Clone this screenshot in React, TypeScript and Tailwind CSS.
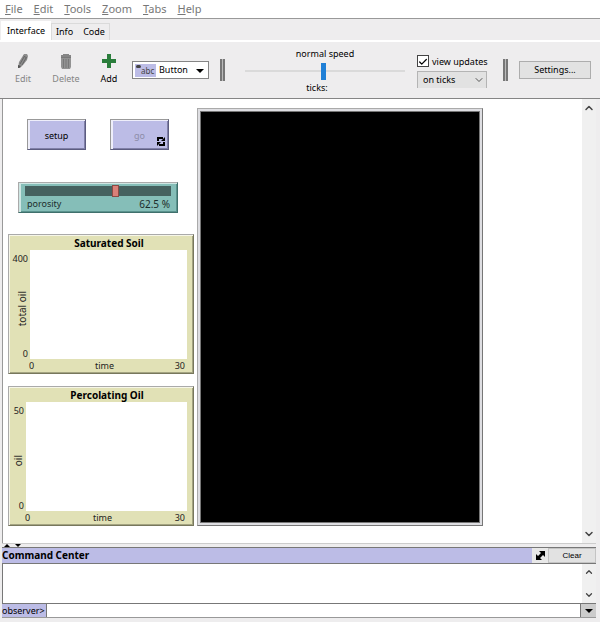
import React from "react";
import { Check, ChevronDown, ChevronUp } from "lucide-react";

const menus = ["File", "Edit", "Tools", "Zoom", "Tabs", "Help"];

function PencilIcon() {
  return (
    <svg width="12" height="16" viewBox="0 0 12 16" aria-hidden="true">
      <path d="M7 1h3l1 2-1 4-4 5-3 3H1l1-6z" fill="#8c8c8c" />
      <path d="M6.500 3l3.500 2M7 4l-4 7M9 5l-4 7" stroke="#666" fill="none" />
      <path d="M1 12l3 1-2 2H1z" fill="#555" />
    </svg>
  );
}

function TrashIcon() {
  return (
    <svg width="12" height="16" viewBox="0 0 12 16" aria-hidden="true">
      <path d="M3 1h6v1h2v3H1V2h2z" fill="#858585" />
      <path d="M1 5h10v9l-1 2H2l-1-2z" fill="#929292" />
      <path d="M1 4.500h10M3.500 6v9M6 6v9M8.500 6v9" stroke="#787878" fill="none" />
    </svg>
  );
}

function PlusIcon() {
  return (
    <svg width="14" height="14" viewBox="0 0 14 14" aria-hidden="true">
      <path d="M5 0h4v5h5v4H9v5H5V9H0V5h5z" fill="#2a7d3b" />
    </svg>
  );
}

function ForeverIcon() {
  return (
    <svg width="8" height="9" viewBox="0 0 8 9" aria-hidden="true">
      <path d="M1 4V1h5M7 5v3H2" stroke="#000" strokeWidth="2" fill="none" />
      <path d="M4 4h4V0zM4 5H0v4z" fill="#000" />
    </svg>
  );
}

function Divider() {
  return (
    <div className="flex h-[22px] shrink-0 gap-px bg-[#bbb]">
      <span className="w-[2px] bg-[#777]" />
      <span className="w-[2px] bg-[#777]" />
    </div>
  );
}

function Tool({ label, icon, disabled }: { label: string; icon: React.ReactNode; disabled?: boolean }) {
  return (
    <button
      disabled={disabled}
      className="flex w-8 flex-col items-center gap-[2px] text-black disabled:text-[#858585]"
    >
      <span className="flex h-4 items-center">{icon}</span>
      <span className="leading-4">{label}</span>
    </button>
  );
}

function Plot({ title, label, max, narrow }: { title: string; label: string; max: string; narrow?: boolean }) {
  return (
    <section className="flex h-[140px] flex-col border border-t-[#aaa] border-l-[#aaa] border-r-[#77775c] border-b-[#77775c] bg-[#e1e1b6] pt-px pr-[5px] text-[#222] shadow-[inset_1px_1px_0_#f6f6e8,inset_-1px_-1px_0_#a4a482]">
      <h2 className={`text-center text-[10px] leading-[14px] font-bold text-black ${narrow ? "pl-[17px]" : "pl-[21px]"}`}>{title}</h2>
      <div className="flex flex-1">
        <div className={`flex justify-end ${narrow ? "w-[17px]" : "w-[21px]"}`}>
          <div className="flex flex-col items-end justify-between pr-[2px]">
            <span className="leading-[18px]">{max}</span>
            <span className="rotate-180 text-[10px] leading-3 [writing-mode:vertical-rl]">{label}</span>
            <span className="leading-[10px]">0</span>
          </div>
        </div>
        <div className="mr-px flex-1 bg-white" />
      </div>
      <div className={`flex justify-between pr-[3px] leading-[14px] ${narrow ? "pl-4" : "pl-5"}`}>
        <span>0</span>
        <span>time</span>
        <span>30</span>
      </div>
    </section>
  );
}

const widgetButton =
  "flex h-[31px] w-[59px] items-center justify-center border border-t-[#999] border-l-[#999] border-r-[#5c5c80] border-b-[#5c5c80] bg-[#bcbce6] pt-[2px] shadow-[inset_2px_1px_0_#eeeefa,inset_-1px_-1px_0_#8080a8]";

export default function App() {
  return (
    <div className="flex min-h-screen flex-col bg-[#eeedee] font-['Noto_Sans',sans-serif] text-[9px] text-black">
      <nav className="flex h-[19px] items-center gap-[11px] border-b border-[#999] bg-white pl-[5px] text-[11px] text-[#777]">
        {menus.map((m) => (
          <button key={m} className="leading-4">
            <span className="underline">{m[0]}</span>
            {m.slice(1)}
          </button>
        ))}
      </nav>

      <div role="tablist" className="flex h-[21px] items-end pl-px">
        <button role="tab" aria-selected="true" className="h-[19px] w-[50px] bg-white">
          Interface
        </button>
        <div className="flex h-[17px] gap-[10px] border border-b-0 border-[#dadada] px-1">
          <button role="tab" aria-selected="false">Info</button>
          <button role="tab" aria-selected="false">Code</button>
        </div>
      </div>

      <div className="flex h-[59px] items-center border-t-2 border-b border-t-white border-b-[#858585] pr-[9px] pl-[7px]">
        <div className="flex gap-[11px]">
          <Tool label="Edit" icon={<PencilIcon />} disabled />
          <Tool label="Delete" icon={<TrashIcon />} disabled />
          <Tool label="Add" icon={<PlusIcon />} />
        </div>
        <div className="relative ml-[7px] flex h-[18px] w-[77px] shrink-0 border border-[#858585] bg-white">
          <span className="pointer-events-none absolute top-[2px] left-[2px] h-[13px] w-[21px] bg-[#bcbce6] pl-[6px] text-[8px] leading-[13px] text-[#444]">
            abc
            <span className="absolute top-px left-px h-[3px] w-[5px] rounded-full bg-[#444]" />
          </span>
          <select aria-label="Widget type" className="w-full appearance-none pl-[26px] leading-4 outline-none">
            <option>Button</option>
          </select>
          <svg width="8" height="4" viewBox="0 0 8 4" className="pointer-events-none absolute top-[7px] right-1" aria-hidden="true">
            <path d="M0 0h8L4 4z" fill="#000" />
          </svg>
        </div>
        <div className="ml-[11px]">
          <Divider />
        </div>
        <div className="flex flex-1 flex-col items-center pr-3 pl-5">
          <label htmlFor="speed" className="leading-4">normal speed</label>
          <input
            id="speed"
            type="range"
            defaultValue={49}
            className="my-px h-[17px] w-full appearance-none bg-transparent bg-[linear-gradient(#dadada,#dadada)] bg-[length:100%_2px] bg-center bg-no-repeat [&::-webkit-slider-thumb]:h-[17px] [&::-webkit-slider-thumb]:w-[5px] [&::-webkit-slider-thumb]:appearance-none [&::-webkit-slider-thumb]:bg-[#1f7fd6]"
          />
          <span className="mr-4 leading-[14px]">ticks:</span>
        </div>
        <div className="flex w-[72px] flex-col gap-[3px] pt-[2px]">
          <label className="flex items-center gap-[3px] leading-[13px]">
            <span className="relative flex h-[13px] w-3 items-center">
              <input type="checkbox" defaultChecked className="peer h-3 w-3 appearance-none border border-[#444] bg-white" />
              <Check className="pointer-events-none absolute top-[2px] left-[1px] hidden peer-checked:block" size={10} strokeWidth={3} />
            </span>
            view updates
          </label>
          <div className="relative">
            <select aria-label="Update mode" className="h-[17px] w-[70px] appearance-none border border-b-0 border-[#b4b4b4] bg-[#e2e2e2] pl-[5px] outline-none">
              <option>on ticks</option>
            </select>
            <ChevronDown className="pointer-events-none absolute top-[3px] right-1 text-[#555]" size={12} />
          </div>
        </div>
        <div className="ml-[14px]">
          <Divider />
        </div>
        <button className="ml-[11px] h-[18px] w-[72px] border border-[#adadad] bg-[#e2e2e2]">Settings...</button>
      </div>

      <main className="mr-1 ml-[2px] flex flex-1 border-l border-[#999] bg-white">
        <div className="flex flex-1 items-start gap-[3px] pt-[9px] pb-[17px] pl-[5px]">
          <div className="w-[186px] shrink-0 pt-[11px]">
            <div className="flex gap-6 pl-[19px]">
              <button className={widgetButton}>setup</button>
              <button disabled className={`${widgetButton} relative text-[#8c8ca8]`}>
                go
                <span className="absolute right-[3px] bottom-[3px]">
                  <ForeverIcon />
                </span>
              </button>
            </div>
            <div className="mt-8 ml-[10px] flex h-[31px] w-40 flex-col border border-t-[#aaa] border-l-[#aaa] border-r-[#3f706c] border-b-[#3f706c] bg-[#85beb8] px-[6px] pt-[2px] shadow-[inset_2px_1px_0_#cfe6e3,inset_-1px_-1px_0_#5b938e]">
              <input
                id="porosity"
                type="range"
                step="0.5"
                defaultValue={62.5}
                className="h-3 w-full appearance-none bg-transparent bg-[linear-gradient(#45615f,#45615f)] bg-[length:100%_10px] bg-center bg-no-repeat [&::-webkit-slider-thumb]:h-3 [&::-webkit-slider-thumb]:w-[7px] [&::-webkit-slider-thumb]:appearance-none [&::-webkit-slider-thumb]:border [&::-webkit-slider-thumb]:border-[#8d4a44] [&::-webkit-slider-thumb]:bg-[#d98078]"
              />
              <div className="flex justify-between pr-px pl-[2px] text-[#1c2d2c]">
                <label htmlFor="porosity" className="leading-[14px]">porosity</label>
                <span className="text-[10px] leading-[14px]">62.5 %</span>
              </div>
            </div>
            <div className="mt-[21px] flex flex-col gap-3">
              <Plot title="Saturated Soil" label="total oil" max="400" />
              <Plot title="Percolating Oil" label="oil" max="50" narrow />
            </div>
          </div>
          <div className="h-[418px] w-[286px] border border-t-[#aaa] border-l-[#aaa] border-r-[#777] border-b-[#777] bg-[#dedee2] p-[2px]">
            <div className="h-full border border-[#777] bg-black" />
          </div>
        </div>
        <div className="flex w-[14px] flex-col items-center justify-between bg-[#f0f0f0] py-[3px] text-[#444]">
          <ChevronUp size={12} strokeWidth={3} />
          <ChevronDown size={12} strokeWidth={3} />
        </div>
      </main>

      <section className="mr-1 ml-[2px] flex flex-col">
        <div className="flex h-1 items-end gap-[5px] border-t border-[#ccc] pl-[2px]">
          <svg width="6" height="3" viewBox="0 0 6 3" aria-hidden="true"><path d="M0 3h6L3 0z" /></svg>
          <svg width="6" height="3" viewBox="0 0 6 3" aria-hidden="true"><path d="M0 0h6L3 3z" /></svg>
        </div>
        <div className="flex h-[17px] border-y border-[#777] bg-[#bcbce6]">
          <h2 className="flex-1 text-[10px] leading-[15px] font-bold">Command Center</h2>
          <button aria-label="Switch orientation" className="flex w-4 items-center justify-center bg-[#e8e8e8]">
            <svg width="9" height="9" viewBox="0 0 9 9" aria-hidden="true">
              <path d="M3 0h6v6L7 4 4 7l2 2H0V3l2 2 3-3z" />
            </svg>
          </button>
          <button className="w-12 border border-[#c4c4c4] bg-[#e2e2e2] font-['Liberation_Sans',sans-serif] text-[8px] leading-3">Clear</button>
        </div>
        <div className="flex h-10 border-b border-l border-[#777] bg-white">
          <div className="flex-1" />
          <div className="flex w-[14px] flex-col items-center justify-between bg-[#f0f0f0] py-[3px] text-[#444]">
            <ChevronUp size={10} strokeWidth={3} />
            <ChevronDown size={10} strokeWidth={3} />
          </div>
        </div>
        <div className="mb-1 flex h-[14px] border-b border-[#999] bg-white">
          <label htmlFor="cmd" className="border-r border-[#777] bg-[#bcbce6] pr-px leading-[13px]">observer&gt;</label>
          <input id="cmd" className="min-w-0 flex-1 outline-none" />
          <button aria-label="History" className="flex w-4 items-center justify-center border-l border-[#777] bg-[#ccc]">
            <svg width="8" height="4" viewBox="0 0 8 4" aria-hidden="true"><path d="M0 0h8L4 4z" /></svg>
          </button>
        </div>
      </section>
    </div>
  );
}
